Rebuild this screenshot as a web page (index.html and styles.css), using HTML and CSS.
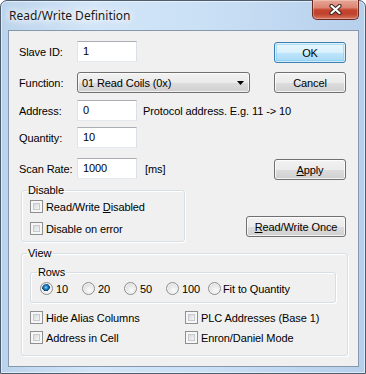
FILE: index.html
```html
<!DOCTYPE html>
<html lang="en">

<head>
    <meta charset="UTF-8">
    <meta name="viewport" content="width=device-width, initial-scale=1.0">
    <title>Read/Write Definition</title>

    <link rel="stylesheet" href="styles.css">
</head>

<body>
    <div class="window">
        <div class="titlebar">
            <span class="title">Read/Write Definition</span>
            <div class="close-btn">
                <svg width="13" height="11" viewBox="0 0 13 11">
                    <path d="M2.5 2 L10.5 9 M10.5 2 L2.5 9" stroke="#3a2420" stroke-width="4.2" stroke-linecap="round" fill="none" />
                    <path d="M2.5 2 L10.5 9 M10.5 2 L2.5 9" stroke="#ffffff" stroke-width="2.2" stroke-linecap="round" fill="none" />
                </svg>
            </div>
        </div>

        <div class="client">
            <div class="top">
                <div class="fields">
                    <div class="row row-slave">
                        <span class="lbl">Slave ID:</span>
                        <div class="edit">1</div>
                    </div>
                    <div class="row row-func">
                        <span class="lbl">Function:</span>
                        <div class="combo">
                            <span>01 Read Coils (0x)</span>
                            <svg width="7" height="4" viewBox="0 0 7 4"><polygon points="0,0 7,0 3.5,4" fill="#000" /></svg>
                        </div>
                    </div>
                    <div class="row row-addr">
                        <span class="lbl">Address:</span>
                        <div class="edit">0</div>
                        <span class="hint">Protocol address. E.g. 11 -&gt; 10</span>
                    </div>
                    <div class="row row-qty">
                        <span class="lbl">Quantity:</span>
                        <div class="edit">10</div>
                    </div>
                    <div class="row row-scan">
                        <span class="lbl">Scan Rate:</span>
                        <div class="edit">1000</div>
                        <span class="unit">[ms]</span>
                    </div>

                    <fieldset class="group group-disable">
                        <legend>Disable</legend>
                        <div class="check"><span class="box"></span><span>Read/Write <u>D</u>isabled</span></div>
                        <div class="check check-2"><span class="box"></span><span>Disable on error</span></div>
                    </fieldset>
                </div>

                <div class="buttons">
                    <div class="btn btn-default btn-ok">OK</div>
                    <div class="btn btn-cancel">Cancel</div>
                    <div class="btn btn-apply"><span><u>A</u>pply</span></div>
                    <div class="btn btn-once"><span><u>R</u>ead/Write Once</span></div>
                </div>
            </div>

            <fieldset class="group group-view">
                <legend>View</legend>
                <fieldset class="group group-rows">
                    <legend>Rows</legend>
                    <div class="radios">
                        <div class="radio-item"><span class="radio checked"></span><span>10</span></div>
                        <div class="radio-item"><span class="radio"></span><span>20</span></div>
                        <div class="radio-item"><span class="radio"></span><span>50</span></div>
                        <div class="radio-item"><span class="radio"></span><span>100</span></div>
                        <div class="radio-item radio-fit"><span class="radio"></span><span>Fit to Quantity</span></div>
                    </div>
                </fieldset>
                <div class="view-checks">
                    <div class="check"><span class="box"></span><span>Hide Alias Columns</span></div>
                    <div class="check"><span class="box"></span><span>PLC Addresses (Base 1)</span></div>
                    <div class="check"><span class="box"></span><span>Address in Cell</span></div>
                    <div class="check"><span class="box"></span><span>Enron/Daniel Mode</span></div>
                </div>
            </fieldset>
        </div>
    </div>
</body>

</html>
```

FILE: styles.css
```css
* {
    box-sizing: border-box;
}

body {
    margin: 0;
    background: #ffffff;
    font-family: 'Liberation Sans', Arial, sans-serif;
    font-size: 11px;
    letter-spacing: -0.1px;
    color: #000;
}

/* window frame */
.window {
    width: 366px;
    height: 374px;
    border: 1px solid #4e5d6e;
    border-radius: 7px 7px 0 0;
    padding: 0 6px 6px 7px;
    display: flex;
    flex-direction: column;
    background: linear-gradient(to right, #bad3ec 0%, #d3e6f8 25%, #cae0f5 55%, #bfd7f0 80%, #b6cfeb 100%);
    box-shadow: inset 0 0 0 1px rgba(255, 255, 255, 0.55);
}

.titlebar {
    height: 29px;
    display: flex;
    align-items: center;
}

.title {
    font-family: 'Noto Sans', 'Open Sans', sans-serif;
    font-size: 12px;
    letter-spacing: 0;
    color: #1a1a1a;
    margin-left: 1px;
    text-shadow: 0 0 6px #ffffff, 0 0 10px #ffffff, 0 0 14px #ffffff;
}

.close-btn {
    margin-left: auto;
    margin-top: -1px;
    align-self: flex-start;
    width: 47px;
    height: 20px;
    border: 1px solid #6a2a22;
    border-top: none;
    border-radius: 0 0 5px 5px;
    background: linear-gradient(#e6a797 0%, #dc8573 40%, #c5452f 52%, #c0432d 75%, #d7775f 100%);
    box-shadow: inset 0 0 0 1px rgba(255, 230, 220, 0.35);
    display: flex;
    align-items: center;
    justify-content: center;
}

/* client area */
.client {
    flex: 1;
    border: 1px solid #8598ad;
    background: #f0f0f0;
    padding: 10px 10px 0 10px;
}

.top {
    display: flex;
}

.fields {
    flex: 1;
    min-width: 0;
    display: flex;
    flex-direction: column;
}

.row {
    height: 21px;
    display: flex;
    align-items: center;
    white-space: nowrap;
}

.row-func {
    margin-top: 10px;
}

.row-addr {
    margin-top: 7px;
}

.row-qty {
    margin-top: 6px;
}

.row-scan {
    margin-top: 10px;
}

.lbl {
    width: 58px;
    flex: none;
}

.edit {
    width: 60px;
    height: 21px;
    flex: none;
    background: #ffffff;
    border: 1px solid;
    border-color: #abadb3 #dbdfe6 #e3e9ef #e2e3ea;
    padding-left: 5px;
    line-height: 18px;
}

.combo {
    width: 173px;
    height: 21px;
    flex: none;
    border: 1px solid #707070;
    border-radius: 3px;
    background: linear-gradient(#f2f2f2 0%, #ebebeb 50%, #dddddd 51%, #cfcfcf 100%);
    box-shadow: inset 0 0 0 1px rgba(255, 255, 255, 0.7);
    padding: 0 5px 0 4px;
    display: flex;
    align-items: center;
    justify-content: space-between;
}

.hint {
    margin-left: 6px;
}

.unit {
    margin-left: 8px;
}

/* group boxes */
.group {
    margin: 0;
    border: 1px solid #d5dfe5;
    border-radius: 3px;
    box-shadow: inset 1px 1px 0 #ffffff, 1px 1px 0 #ffffff;
    padding: 3px 8px 6px 5px;
    min-width: 0;
}

.group legend {
    padding: 0 1px;
    line-height: 13px;
}

.group-disable {
    width: 164px;
    margin: 5px 0 0 2px;
}

.check {
    height: 13px;
    display: flex;
    align-items: center;
    gap: 3px;
    margin-left: 3px;
    white-space: nowrap;
}

.check-2 {
    margin-top: 9px;
}

.box {
    width: 13px;
    height: 13px;
    flex: none;
    border: 1px solid #8e8f8f;
    padding: 2px;
    background: linear-gradient(135deg, #d2d4d8 0%, #eeeff0 70%, #f7f7f7 100%) content-box, #f6f6f6;
    box-shadow: inset 0 0 0 2px #f6f6f6, inset 0 0 0 3px #c6c9cd;
}

/* buttons column */
.buttons {
    width: 102px;
    flex: none;
    display: flex;
    flex-direction: column;
    align-items: flex-end;
    padding-right: 2px;
}

.btn {
    width: 72px;
    height: 21px;
    border: 1px solid #707070;
    border-radius: 3px;
    background: linear-gradient(#f2f2f2 0%, #ebebeb 50%, #dddddd 51%, #cfcfcf 100%);
    box-shadow: inset 0 0 0 1px rgba(255, 255, 255, 0.75);
    display: flex;
    align-items: center;
    justify-content: center;
    white-space: nowrap;
}

.btn-default {
    border-color: #3c7fb1;
    background: linear-gradient(#eaf6fd 0%, #d9f0fc 50%, #bee6fd 51%, #a7d9f5 100%);
    box-shadow: inset 0 0 0 1px rgba(255, 255, 255, 0.6), inset 0 0 0 2px rgba(120, 200, 240, 0.5);
}

.btn-ok {
    margin-top: 1px;
}

.btn-cancel {
    margin-top: 9px;
}

.btn-apply {
    margin-top: 66px;
}

.btn-once {
    width: 100px;
    margin-top: 36px;
}

/* view group */
.group-view {
    width: 327px;
    margin: 5px 0 0 2px;
    padding-bottom: 11px;
}

.group-rows {
    margin: 3px 3px 0 3px;
    padding: 3px 8px 7px 6px;
}

.radios {
    display: flex;
    margin-left: 3px;
}

.radio-item {
    width: 42px;
    height: 13px;
    flex: none;
    display: flex;
    align-items: center;
    gap: 3px;
    white-space: nowrap;
}

.radio-fit {
    gap: 2px;
}

.radio {
    width: 13px;
    height: 13px;
    flex: none;
    border: 1px solid #8e8f8f;
    border-radius: 50%;
    background: radial-gradient(circle at 60% 65%, #fbfbfb 0%, #e4e4e4 55%, #c9cbce 100%);
    box-shadow: inset 0 0 0 1px #f4f4f4;
}

.radio.checked {
    background: radial-gradient(circle at 45% 40%, #9fdcfb 0, #2a8fd0 1.5px, #125a94 3px, #0d3f6a 3.6px, transparent 4px),
        radial-gradient(circle at 60% 65%, #fbfbfb 0%, #e4e4e4 55%, #c9cbce 100%);
}

.view-checks {
    display: grid;
    grid-template-columns: 155px 1fr;
    row-gap: 7px;
    margin-top: 8px;
}
```
